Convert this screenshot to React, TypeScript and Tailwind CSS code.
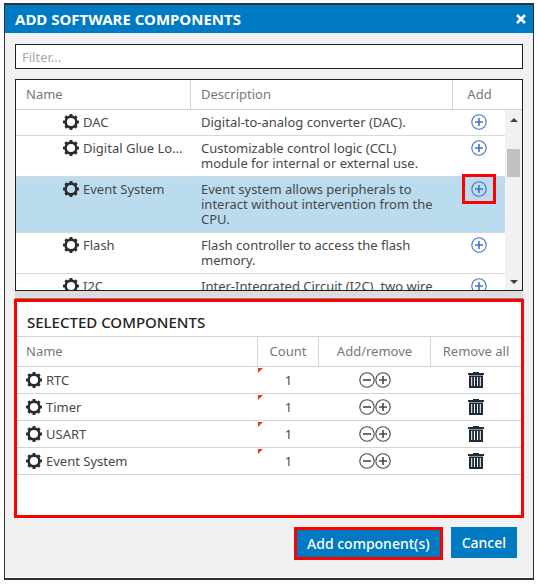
import React from "react";

const available = [
  { name: "DAC", description: "Digital-to-analog converter (DAC)." },
  { name: "Digital Glue Logic", description: "Customizable control logic (CCL) module for internal or external use." },
  {
    name: "Event System",
    description: "Event system allows peripherals to interact without intervention from the CPU.",
    active: true,
  },
  { name: "Flash", description: "Flash controller to access the flash memory." },
  { name: "I2C", description: "Inter-Integrated Circuit (I2C), two wire interface." },
];

const selected = [
  { name: "RTC", count: 1 },
  { name: "Timer", count: 1 },
  { name: "USART", count: 1 },
  { name: "Event System", count: 1 },
];

const teeth = [0, 45, 90, 135, 180, 225, 270, 315];

function Gear() {
  return (
    <svg viewBox="0 0 16 16" className="size-4 shrink-0 text-[#2b2b2b]" aria-hidden="true">
      <circle cx="8" cy="8" r="5.4" fill="none" stroke="currentColor" strokeWidth="2.6" />
      {teeth.map((angle) => (
        <rect key={angle} x="6.6" y="0" width="2.8" height="3" fill="currentColor" transform={`rotate(${angle} 8 8)`} />
      ))}
    </svg>
  );
}

function CircleSign({ plus }: { plus?: boolean }) {
  return (
    <svg viewBox="0 0 16 16" className="size-4" fill="none" stroke="currentColor" aria-hidden="true">
      <circle cx="8" cy="8" r="7.2" strokeWidth="1.1" />
      <path d={plus ? "M4 8h8M8 4v8" : "M4 8h8"} strokeWidth="1.6" />
    </svg>
  );
}

function Trash() {
  return (
    <svg viewBox="0 0 16 16" className="size-4 text-[#1f2b38]" fill="currentColor" aria-hidden="true">
      <path d="M5 0h6v1h5v2H0V1h5z" />
      <path fillRule="evenodd" d="M1 3.6h14V16H1zM3.2 5v9h1V5zM6 5v9h1V5zM9 5v9h1V5zM11.8 5v9h1V5z" />
    </svg>
  );
}

export default function App() {
  return (
    <div className="bg-white pt-[3px] pr-1 pb-[2px] pl-1 font-['Noto_Sans','Open_Sans',sans-serif] text-[13px] text-[#484848]">
      <div role="dialog" aria-labelledby="dialog-title" className="border border-t-2 border-b-2 border-[#2d3138] bg-[#f1f1f1]">
        <header className="flex h-7 items-center justify-between bg-[#007ac2] pr-1.5 pl-2.5 text-white">
          <h1 id="dialog-title" className="text-[15px] font-bold">ADD SOFTWARE COMPONENTS</h1>
          <button type="button" aria-label="Close" className="flex size-3 items-center justify-center">
            <svg viewBox="0 0 12 12" className="size-3" stroke="currentColor" strokeWidth="2.6" aria-hidden="true">
              <path d="M2 2l8 8M10 2l-8 8" />
            </svg>
          </button>
        </header>

        <div className="px-2.5 pt-[11px]">
          <input
            type="text"
            aria-label="Filter components"
            placeholder="Filter..."
            className="block h-[25px] w-full border border-[#202020] bg-white px-1.5 outline-none placeholder:text-[#a9a9a9]"
          />

          <div className="relative mt-2.5 h-[212px] overflow-hidden border border-[#202020] bg-white">
            <table className="w-full table-fixed border-separate border-spacing-0">
              <colgroup>
                <col className="w-[175px]" />
                <col />
                <col className="w-[69px]" />
              </colgroup>
              <thead>
                <tr className="h-[30px] text-left text-[#777777]">
                  <th className="border-r border-b border-[#d4d4d4] pl-2.5 font-normal">Name</th>
                  <th className="border-r border-b border-[#d4d4d4] pl-2.5 font-normal">Description</th>
                  <th className="border-b border-[#d4d4d4] pr-4 text-center font-normal">Add</th>
                </tr>
              </thead>
              <tbody>
                {available.map((item) => (
                  <tr key={item.name} className={item.active ? "bg-[#bbdcef] align-top leading-[15px]" : "align-top leading-[15px]"}>
                    <td className="border-b border-[#d9d9d9] pt-1 pr-2 pl-[47px]">
                      <div className="flex items-center gap-1">
                        <Gear />
                        <span className="-my-0.5 truncate leading-5">{item.name}</span>
                      </div>
                    </td>
                    <td className="border-b border-[#d9d9d9] py-[5px] pr-4 pl-2.5">{item.description}</td>
                    <td className="border-b border-[#d9d9d9] pt-1 pr-[17px] text-center">
                      <button type="button" aria-label={`Add ${item.name}`} className="relative inline-flex text-[#4472c4]">
                        <CircleSign plus />
                        {item.active && <span className="absolute -inset-x-[9px] -inset-y-[7px] border-[3px] border-[#ff0000]" />}
                      </button>
                    </td>
                  </tr>
                ))}
              </tbody>
            </table>
            <div className="absolute top-[30px] right-0 bottom-0 flex w-[17px] flex-col items-center bg-[#f1f1f1] py-1.5" aria-hidden="true">
              <span className="mt-0.5 border-x-4 border-b-4 border-transparent border-b-[#404040]" />
              <span className="mt-[27px] h-7 w-[13px] bg-[#c1c1c1]" />
              <span className="mt-auto border-x-4 border-t-4 border-transparent border-t-[#404040]" />
            </div>
          </div>
          <div className="h-2 border-b border-[#808080] bg-[#dcdcdc]" />
        </div>

        <div className="px-[9px]">
          <section className="h-[219px] border-[3px] border-[#ff0000] bg-white">
            <h2 className="flex h-[34px] items-center pt-1.5 pl-2.5 text-[15px] font-medium text-[#222222]">SELECTED COMPONENTS</h2>
            <table className="w-full table-fixed border-separate border-spacing-0">
              <colgroup>
                <col />
                <col className="w-[61px]" />
                <col className="w-[112px]" />
                <col className="w-[90px]" />
              </colgroup>
              <thead>
                <tr className="h-[31px] text-[#777777]">
                  <th className="border-y border-r border-[#d4d4d4] pl-[9px] text-left font-normal">Name</th>
                  <th className="border-y border-r border-[#d4d4d4] font-normal">Count</th>
                  <th className="border-y border-r border-[#d4d4d4] font-normal">Add/remove</th>
                  <th className="border-y border-[#d4d4d4] font-normal">Remove all</th>
                </tr>
              </thead>
              <tbody>
                {selected.map((item) => (
                  <tr key={item.name} className="h-[27px] leading-[15px]">
                    <td className="border-b border-[#d4d4d4] pl-[9px]">
                      <div className="flex items-center gap-1">
                        <Gear />
                        <span>{item.name}</span>
                      </div>
                    </td>
                    <td className="relative border-b border-[#d4d4d4] text-center">
                      <span className="absolute top-px left-0 border-t-5 border-r-5 border-transparent border-t-[#e03c28]" />
                      {item.count}
                    </td>
                    <td className="border-b border-[#d4d4d4]">
                      <div className="flex justify-center">
                        <button type="button" aria-label={`Remove one ${item.name}`}><CircleSign /></button>
                        <button type="button" aria-label={`Add one ${item.name}`}><CircleSign plus /></button>
                      </div>
                    </td>
                    <td className="border-b border-[#d4d4d4]">
                      <button type="button" aria-label={`Remove all ${item.name}`} className="mx-auto block"><Trash /></button>
                    </td>
                  </tr>
                ))}
              </tbody>
            </table>
          </section>
        </div>

        <footer className="flex items-start justify-end gap-2 border-b border-white pt-[9px] pr-4 pb-[17px] text-sm font-medium text-white">
          <button type="button" className="h-[33px] border-[3px] border-[#ff0000] bg-[#007ac2] px-2.5">Add component(s)</button>
          <button type="button" className="h-[31px] bg-[#007ac2] px-[11px]">Cancel</button>
        </footer>
      </div>
    </div>
  );
}
